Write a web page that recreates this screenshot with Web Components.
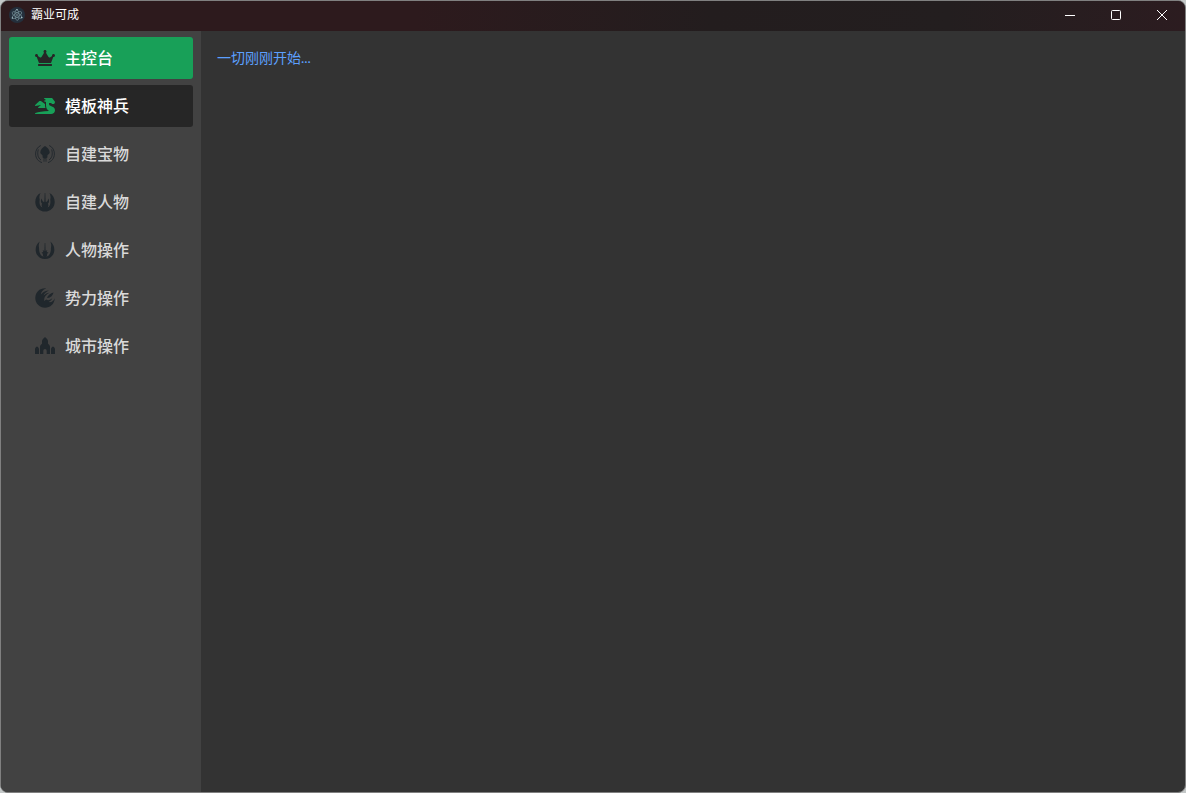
<!DOCTYPE html>
<html lang="zh-CN">
<head>
<meta charset="utf-8">
<title>霸业可成</title>
<style>
  html { height: 100%; background: #c4c8c8; }
  body { margin: 0; height: 100%; font-family: "Liberation Sans", "Noto Sans CJK SC", sans-serif; font-size: 14px; color: #fff; }
</style>
</head>
<body>
<app-window>
  <title-bar slot="title">霸业可成</title-bar>
  <side-menu slot="menu">
    <menu-item icon="crown" state="active">主控台</menu-item>
    <menu-item icon="dragon" state="hover">模板神兵</menu-item>
    <menu-item icon="kraken">自建宝物</menu-item>
    <menu-item icon="order">自建人物</menu-item>
    <menu-item icon="wings">人物操作</menu-item>
    <menu-item icon="phoenix">势力操作</menu-item>
    <menu-item icon="city">城市操作</menu-item>
  </side-menu>
  <log-panel>一切刚刚开始...</log-panel>
</app-window>

<script>
class BaseElement extends HTMLElement {
  render(html) {
    this.attachShadow({ mode: 'open' }).innerHTML = html;
  }
}

customElements.define('app-window', class extends BaseElement {
  connectedCallback() {
    this.render(`
      <style>
        :host { display: flex; flex-direction: column; box-sizing: border-box; min-height: 100%;
                border: 1px solid #808080; border-radius: 8px; overflow: hidden; background: #333; }
        .body { display: flex; flex: 1; }
        main { flex: 1; min-width: 0; }
      </style>
      <slot name="title"></slot>
      <div class="body"><slot name="menu"></slot><main><slot></slot></main></div>`);
  }
});

customElements.define('title-bar', class extends BaseElement {
  connectedCallback() {
    this.render(`
      <style>
        :host { display: flex; align-items: flex-start; height: 30px; font-size: 12px; line-height: 28px;
                background: linear-gradient(90deg, #2d1a1d 0%, #2d1a1d 35%, #231d1e 60%, #231e1f 80%, #2c1c20 100%); }
        .logo { width: 16px; height: 28px; margin: 0 6px 0 8px; }
        .name { flex: 1; }
        button { display: grid; place-items: center; width: 46px; height: 28px; padding: 0; border: 0;
                 background: none; color: #fff; }
        button svg { width: 12px; height: 12px; fill: none; stroke: currentColor; }
      </style>
      <svg class="logo" viewBox="0 0 16 16" aria-hidden="true">
        <circle cx="8" cy="8" r="8" fill="#242f3c"/>
        <g fill="none" stroke="#7d9ba3" stroke-width=".6">
          <ellipse cx="8" cy="8" rx="5.4" ry="2.1" transform="rotate(28 8 8)"/>
          <ellipse cx="8" cy="8" rx="5.4" ry="2.1" transform="rotate(88 8 8)"/>
          <ellipse cx="8" cy="8" rx="5.4" ry="2.1" transform="rotate(148 8 8)"/>
        </g>
        <g fill="#a8c3c8"><circle cx="8" cy="8" r=".7"/><circle cx="3.4" cy="11" r=".8"/><circle cx="12.8" cy="10.6" r=".8"/><circle cx="8" cy="2.7" r=".8"/></g>
      </svg>
      <span class="name"><slot></slot></span>
      <button type="button" aria-label="最小化"><svg viewBox="0 0 12 12"><path d="M1 6.5h10"/></svg></button>
      <button type="button" aria-label="最大化"><svg viewBox="0 0 12 12"><rect x="1.5" y="1.5" width="9" height="9" rx="1"/></svg></button>
      <button type="button" aria-label="关闭"><svg viewBox="0 0 12 12"><path d="M1 1l10 10M11 1L1 11"/></svg></button>`);
  }
});

customElements.define('side-menu', class extends BaseElement {
  connectedCallback() {
    this.render(`
      <style>
        :host { display: block; flex: none; width: 200px; box-sizing: border-box; padding: 6px 8px; background: #424242; }
        nav { display: flex; flex-direction: column; gap: 6px; }
      </style>
      <nav><slot></slot></nav>`);
  }
});

const ICONS = {
  crown: ['0 0 640 512', '<path d="M528 448H112c-8.800 0-16 7.200-16 16v32c0 8.800 7.200 16 16 16h416c8.800 0 16-7.200 16-16v-32c0-8.800-7.200-16-16-16zm64-320c-26.500 0-48 21.500-48 48 0 7.100 1.600 13.700 4.400 19.800L476 239.200c-15.400 9.200-35.300 4-44.200-11.600L350.300 85C361 76.200 368 63 368 48c0-26.500-21.500-48-48-48s-48 21.500-48 48c0 15 7 28.200 17.700 37l-81.500 142.600c-8.900 15.600-28.900 20.800-44.200 11.600l-72.300-43.400c2.700-6 4.400-12.700 4.400-19.800 0-26.500-21.500-48-48-48S0 149.500 0 176s21.500 48 48 48c2.600 0 5.200-.4 7.700-.8L128 416h384l72.300-192.800c2.500.4 5.100.8 7.700.8 26.500 0 48-21.500 48-48s-21.500-48-48-48z"/>'],
  dragon: ['0 0 640 512', '<path d="M18.320 255.780L192 223.960l-91.280 68.690c-10.080 10.080-2.940 27.310 11.310 27.310h222.700c-9.440-26.400-14.730-54.470-14.730-83.380v-42.270l-119.730-87.600c-23.820-15.880-55.290-14.010-77.060 4.590L5.810 227.640c-12.380 10.330-3.450 30.420 12.510 28.140zm556.870 34.100l-100.660-50.310A47.992 47.992 0 0 1 448 196.650v-36.690h64l28.090 22.630c6 6 14.140 9.370 22.630 9.370h30.970a32 32 0 0 0 28.620-17.690l14.310-28.620a32.005 32.005 0 0 0-3.020-33.510l-74.530-99.380C553.020 4.700 543.540 0 533.470 0H296.020c-7.130 0-10.700 8.570-5.660 13.610L352 63.960 292.420 88.800c-5.900 2.950-5.900 11.360 0 14.310L352 127.960v108.620c0 72.080 36.030 139.390 96 179.380-195.590 6.810-344.560 41.010-434.100 60.910C5.780 478.670 0 485.880 0 494.200 0 504 7.950 512 17.760 512h499.080c63.290.01 119.610-47.560 122.990-110.760 2.520-47.280-22.730-90.400-64.640-111.360z"/>'],
  kraken: ['0 0 20 20', '<path d="M10 2c-2.400 1.400-4.700 4-4.700 6.300 0 1.100.5 1.800 1.400 2.200.6.300.9.700.9 1.400v1.600l1 .5v3.700h.8v-3.300h1.200v3.300h.8V14l1-.5v-1.600c0-.7.3-1.100.9-1.400.9-.4 1.400-1.100 1.400-2.200C14.700 6 12.400 3.400 10 2z"/><path d="M5.800 1.500C2.400 3 .6 6.300.6 9.900c0 4.300 2.700 7.500 6.400 8.700M14.200 1.500c3.400 1.500 5.200 4.800 5.200 8.400 0 4.300-2.700 7.500-6.400 8.700M3.400 5.500C2.100 9 2.500 13.700 6 16M16.600 5.500c1.300 3.500.9 8.200-2.600 10.500" fill="none" stroke="currentColor" stroke-width=".9"/>'],
  order: ['0 0 20 20', '<path d="M5.600 1C1.900 2.700.3 6 .3 10c0 5.500 4.300 9.600 9.700 9.600s9.700-4.100 9.700-9.600c0-4-1.600-7.300-5.300-9 1.200 2 1.500 4.300.9 6.200-.1.900 1.300 6.300-2.700 8.300.9-1.400 1-2.700.3-3.700 1.700-1.800 1.500-4.400.1-5.400.3 2-.8 3.200-2.300 3.700L10.300 1h-.6l-.4 9.100C7.800 9.600 6.700 8.400 7 6.400c-1.400 1-1.600 3.600.1 5.400-.7 1-.6 2.300.3 3.700-4-2-2.600-7.400-2.700-8.300C4.100 5.300 4.400 3 5.600 1z"/>'],
  wings: ['0 0 20 20', '<path d="M4.700 1.500C1.700 4 .5 6.800.7 10.500c.3 5.100 4.300 8.600 9.300 8.600s9-3.500 9.300-8.600c.2-3.700-1-6.500-4-9 1.200 2.700 1.100 4.500.6 6.500.3 3.800-1 7.600-4.600 8.800.9-1.200 1-2 .7-2.800l1.500-1.500-1.800-.5.600-1.900-1.700 1L10.300 3h-.6l-.3 8.100-1.700-1 .6 1.900-1.800.5L8 14c-.3.800-.2 1.600.7 2.800C5.100 15.600 3.800 11.800 4.100 8c-.5-2-.6-3.800.6-6.500z"/>'],
  phoenix: ['0 0 20 20', '<path d="M11 .4C5-.1.3 4.300.3 10c0 5.400 4.300 9.700 9.700 9.700 5.300 0 9.600-4.100 9.700-9.500-1 2.800-3.300 4.400-6.200 3.800 1.900-.7 3.100-1.900 3.700-3.700-1.800 1.700-4.200 2.500-5.900 1.200L9.100 13l.1-2.100c.4-2.400 2.300-4.500 5.200-6.100-2.200.2-4.100 1-5.900 2.800C9.300 5.500 11.300 3.900 14 2.500c-3.100 0-5.900 1.200-8.200 3.900C6 4 8 1.600 11 .4z"/><path d="M18.600 4.600c-3.300.9-5.700 2.700-6.600 5.400 3 .4 5.500-1.600 6.600-5.400z"/>'],
  city: ['0 0 20 20', '<path d="M10 1c2 1.700 3 2.800 3 4.500v2.300c1.300.8 2 1.900 2 3.200v7h-3.300v-3.200a1.700 1.700 0 0 0-3.400 0V18H5v-7c0-1.300.7-2.400 2-3.200V5.500C7 3.800 8 2.700 10 1zM2 10.500c1.300.8 2 1.500 2 3V18H0v-4.500c0-1.500.7-2.200 2-3zM18 10.500c1.300.8 2 1.500 2 3V18h-4v-4.500c0-1.500.7-2.200 2-3z"/>']
};

customElements.define('menu-item', class extends BaseElement {
  connectedCallback() {
    const [box, shape] = ICONS[this.getAttribute('icon')];
    this.render(`
      <style>
        :host { display: block; --label: #d9d9d9; --icon: #20272c; --fill: transparent; }
        :host([state="active"]) { --label: #fff; --icon: #262626; --fill: #18a058; }
        :host([state="hover"]) { --label: #fff; --icon: #18a058; --fill: #262626; }
        button { display: flex; align-items: center; gap: 10px; width: 100%; height: 42px; padding: 0 26px;
                 border: 0; border-radius: 3px; background: var(--fill); color: var(--label);
                 font: inherit; font-size: 16px; font-weight: 500; line-height: 24px; text-align: left; }
        svg { flex: none; width: 20px; height: 20px; color: var(--icon); fill: currentColor; }
        span { padding-top: 2px; }
      </style>
      <button type="button"><svg viewBox="${box}" aria-hidden="true">${shape}</svg><span><slot></slot></span></button>`);
  }
});

customElements.define('log-panel', class extends BaseElement {
  connectedCallback() {
    this.render(`
      <style>
        :host { display: block; padding: 16px; color: #5ca0ff; font-family: Lato, "Noto Sans CJK SC", sans-serif;
                font-size: 14px; line-height: 22px; }
        p { margin: 0; }
      </style>
      <p><slot></slot></p>`);
  }
});
</script>
</body>
</html>
